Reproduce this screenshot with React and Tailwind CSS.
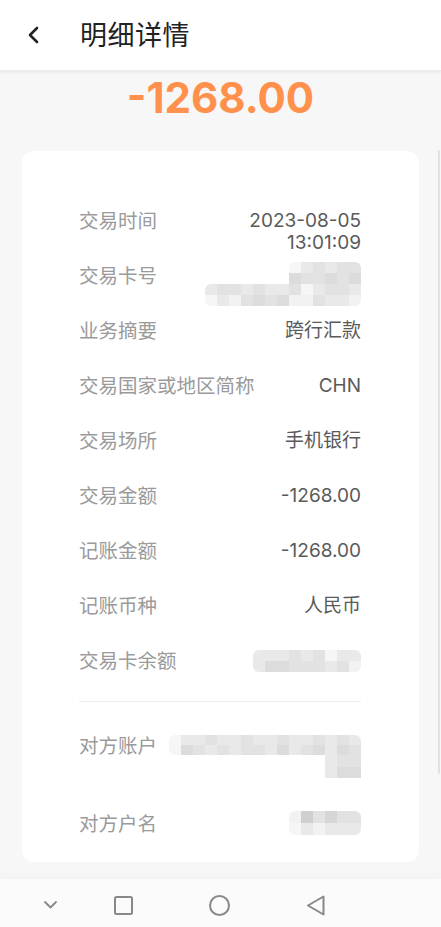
import React from 'react';

const SHADES = ['bg-[#f2f2f2]', 'bg-[#e9e9e9]', 'bg-[#e2e2e2]', 'bg-[#dcdcdc]', 'bg-[#d6d6d6]', 'bg-[#cfcfcf]', 'bg-[#f6f6f6]'];

// pixelated blur block: rows of shade indexes
const Mosaic = ({ rows, cell = 'w-[12px] h-[11px]', className = '' }) => (
  <div className={`flex flex-col items-end overflow-hidden rounded-[6px] ${className}`}>
    {rows.map((r, i) => (
      <div key={i} className="flex">
        {r.map((s, j) => (
          <div key={j} className={`${cell} ${SHADES[s]}`} />
        ))}
      </div>
    ))}
  </div>
);

const Row = ({ label, children, h = 'h-[55px]' }) => (
  <div className={`flex justify-between items-start ${h}`}>
    <span className="text-[19.5px] leading-[22px] text-[#9a9a9a]">{label}</span>
    <div className="text-[19px] leading-[22px] text-[#5a5a5a] text-right">{children}</div>
  </div>
);

export default function App() {
  return (
    <div
      className="relative w-[441px] h-[927px] bg-[#f7f7f7] flex flex-col overflow-hidden"
      style={{ fontFamily: 'Inter, "Noto Sans CJK SC", sans-serif' }}
    >
      <header className="h-[71px] shrink-0 bg-white flex items-center shadow-[0_1px_3px_rgba(0,0,0,0.08)] border-b border-[#ececec]">
        <svg className="ml-[26px]" width="14" height="20" viewBox="0 0 14 20" fill="none">
          <path d="M11 3L4 10l7 7" stroke="#222" strokeWidth="2.6" strokeLinecap="round" strokeLinejoin="round" />
        </svg>
        <h1 className="ml-[40px] text-[27px] leading-none text-[#222] tracking-[0.5px]">明细详情</h1>
      </header>

      <div className="text-center text-[42px] leading-[52px] font-bold text-[#ff914d] mt-[1px]">-1268.00</div>

      <div className="mx-[22px] mt-[27px] bg-white rounded-[12px] pt-[59px] pb-[27px] pl-[57px] pr-[58px]">
        <Row label="交易时间">
          <div>2023-08-05</div>
          <div>13:01:09</div>
        </Row>
        <Row label="交易卡号">
          <div className="-mt-[3px] flex flex-col items-end">
            <Mosaic rows={[[6, 1, 2, 1, 2, 2], [3, 2, 2, 3, 2, 3]]} className="rounded-br-none rounded-bl-none" />
            <Mosaic
              rows={[[1, 2, 2, 1, 2, 1, 1, 2, 6, 1, 2, 2, 1], [6, 1, 0, 2, 3, 2, 3, 0, 0, 2, 1, 1, 0]]}
              className="rounded-tr-none"
            />
          </div>
        </Row>
        <Row label="业务摘要">跨行汇款</Row>
        <Row label="交易国家或地区简称">CHN</Row>
        <Row label="交易场所">手机银行</Row>
        <Row label="交易金额">-1268.00</Row>
        <Row label="记账金额">-1268.00</Row>
        <Row label="记账币种">人民币</Row>
        <Row label="交易卡余额" h="h-[51px]">
          <Mosaic rows={[[1, 1, 1, 2, 1, 2, 6, 1, 1], [1, 3, 3, 2, 2, 2, 1, 2, 0]]} className="w-[108px]" />
        </Row>
        <div className="h-px bg-[#ececec]" />
        <Row label="对方账户" h="h-[78px] mt-[33px]">
          <div className="flex flex-col items-end">
            <Mosaic
              rows={[[6, 1, 1, 2, 1, 1, 2, 1, 1, 2, 1, 1, 2, 1, 2, 1], [6, 3, 2, 1, 2, 1, 2, 2, 1, 3, 1, 2, 3, 1, 3, 2]]}
              cell="w-[12px] h-[10px]"
              className="rounded-br-none"
            />
            <Mosaic rows={[[1, 2, 2], [1, 3, 3]]} cell="w-[12px] h-[11.5px]" className="rounded-none" />
          </div>
        </Row>
        <Row label="对方户名" h="h-[22px]">
          <Mosaic rows={[[0, 5, 2, 4, 2, 2], [6, 1, 0, 1, 1, 1]]} cell="w-[12px] h-[12px]" className="-mt-[2px]" />
        </Row>
      </div>

      <div className="flex-1" />

      <nav className="h-[48px] shrink-0 bg-[#fbfbfb] shadow-[0_-4px_8px_rgba(0,0,0,0.02)] relative">
        <svg className="absolute left-[43px] top-[21px]" width="15" height="10" viewBox="0 0 15 10" fill="none">
          <path d="M2 2l5.5 5.5L13 2" stroke="#888" strokeWidth="1.8" strokeLinecap="round" strokeLinejoin="round" />
        </svg>
        <svg className="absolute left-[113px] top-[16px]" width="21" height="21" viewBox="0 0 21 21" fill="none">
          <rect x="2" y="2" width="17" height="17" rx="1.5" stroke="#888" strokeWidth="2" />
        </svg>
        <svg className="absolute left-[208px] top-[15px]" width="23" height="23" viewBox="0 0 23 23" fill="none">
          <circle cx="11.5" cy="11.5" r="9.5" stroke="#888" strokeWidth="2" />
        </svg>
        <svg className="absolute left-[305px] top-[15px]" width="21" height="23" viewBox="0 0 21 23" fill="none">
          <path d="M18.5 2.5v18L3 11.5z" stroke="#888" strokeWidth="2" strokeLinejoin="round" />
        </svg>
      </nav>

      <div className="absolute left-[438px] top-[150px] w-[2px] h-[624px] bg-[#e2e2e2] rounded-full" />
    </div>
  );
}
